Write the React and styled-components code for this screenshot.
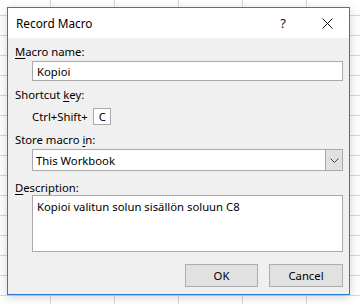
import styled, { createGlobalStyle } from "styled-components";

const GlobalStyle = createGlobalStyle`
  html, body {
    margin: 0;
    padding: 0;
    background: #ffffff;
  }
  body {
    font-family: "Noto Sans", "Liberation Sans", sans-serif;
    font-size: 11.3px;
    color: #000000;
  }
`;

const Desktop = styled.div`
  width: 360px;
  height: 304px;
  box-sizing: border-box;
  padding: 7px 0 0 7px;
  overflow: hidden;
  background-color: #ffffff;
  background-image: linear-gradient(to right, #d8d8d8 1px, transparent 1px),
    linear-gradient(to bottom, #d8d8d8 1px, transparent 1px);
  background-size: 64px 20px;
  background-position: 50px 15px;
`;

const Dialog = styled.div`
  width: 343px;
  height: 288px;
  box-sizing: border-box;
  border: 1px solid #2b78d4;
  background: #f0f0f0;
  box-shadow: 0 2px 10px rgba(0, 0, 0, 0.18);
  display: flex;
  flex-direction: column;
`;

const TitleBar = styled.div`
  height: 30px;
  flex: none;
  background: #ffffff;
  display: flex;
  align-items: center;
  padding-left: 8px;
`;

const Title = styled.span`
  flex: 1;
  font-size: 11.8px;
  line-height: 15px;
  margin-top: 1px;
`;

const CaptionButton = styled.div`
  width: 44px;
  height: 30px;
  display: flex;
  align-items: center;
  justify-content: center;
  font-size: 13px;
  color: #111111;
`;

const Body = styled.div`
  flex: 1;
  display: flex;
  flex-direction: column;
  padding: 0 6px 0 7px;
`;

const Label = styled.div`
  line-height: 15px;
  height: 15px;
  margin-top: ${(p) => p.$top}px;

  u {
    text-decoration: underline;
    text-underline-offset: 2px;
  }
`;

const TextBox = styled.div`
  margin: ${(p) => p.$top}px 0 0 17px;
  height: ${(p) => p.$height}px;
  box-sizing: border-box;
  border: 1px solid #a9a9a9;
  background: #ffffff;
  padding: 0 4px;
  display: flex;
  align-items: ${(p) => (p.$multi ? "flex-start" : "center")};
  padding-top: ${(p) => (p.$multi ? 3 : 0)}px;
  line-height: 15px;
`;

const ShortcutRow = styled.div`
  margin: 6px 0 0 17px;
  display: flex;
  align-items: center;
  gap: 5px;
  line-height: 15px;
`;

const KeyBox = styled.div`
  width: 18px;
  height: 17px;
  box-sizing: border-box;
  border: 1px solid #a9a9a9;
  background: #ffffff;
  display: flex;
  align-items: center;
  padding-left: 5px;
`;

const Select = styled.div`
  margin: 2px 0 0 17px;
  height: 22px;
  box-sizing: border-box;
  border: 1px solid #a9a9a9;
  background: #ffffff;
  display: flex;
  align-items: stretch;
`;

const SelectValue = styled.div`
  flex: 1;
  display: flex;
  align-items: center;
  padding-left: 3px;
  line-height: 15px;
`;

const DropButton = styled.div`
  width: 16px;
  border-left: 1px solid #a9a9a9;
  background: #e1e1e1;
  display: flex;
  align-items: center;
  justify-content: center;
`;

const ButtonRow = styled.div`
  margin-top: 12px;
  display: flex;
  justify-content: flex-end;
  gap: 11px;
`;

const Button = styled.div`
  width: ${(p) => p.$width}px;
  height: 23px;
  box-sizing: border-box;
  border: 1px solid #adadad;
  background: #e1e1e1;
  display: flex;
  align-items: center;
  justify-content: center;
  line-height: 15px;
`;

export default function App() {
  return (
    <>
      <GlobalStyle />
      <Desktop>
        <Dialog>
          <TitleBar>
            <Title>Record Macro</Title>
            <CaptionButton>?</CaptionButton>
            <CaptionButton>
              <svg width="11" height="11" viewBox="0 0 11 11">
                <path d="M0.5 0.5L10.5 10.5M10.5 0.5L0.5 10.5" stroke="#111" strokeWidth="1" fill="none" />
              </svg>
            </CaptionButton>
          </TitleBar>
          <Body>
            <Label $top={6}>
              <u>M</u>acro name:
            </Label>
            <TextBox $top={2} $height={20}>Kopioi</TextBox>
            <Label $top={6}>
              Shortcut <u>k</u>ey:
            </Label>
            <ShortcutRow>
              <span>Ctrl+Shift+</span>
              <KeyBox>C</KeyBox>
            </ShortcutRow>
            <Label $top={7}>
              Store macro <u>i</u>n:
            </Label>
            <Select>
              <SelectValue>This Workbook</SelectValue>
              <DropButton>
                <svg width="9" height="5" viewBox="0 0 9 5">
                  <path d="M0.5 0.5L4.5 4.5L8.5 0.5" stroke="#444" strokeWidth="1" fill="none" />
                </svg>
              </DropButton>
            </Select>
            <Label $top={9}>
              <u>D</u>escription:
            </Label>
            <TextBox $top={0} $height={57} $multi>
              Kopioi valitun solun sisällön soluun C8
            </TextBox>
            <ButtonRow>
              <Button $width={73}>OK</Button>
              <Button $width={74}>Cancel</Button>
            </ButtonRow>
          </Body>
        </Dialog>
      </Desktop>
    </>
  );
}
